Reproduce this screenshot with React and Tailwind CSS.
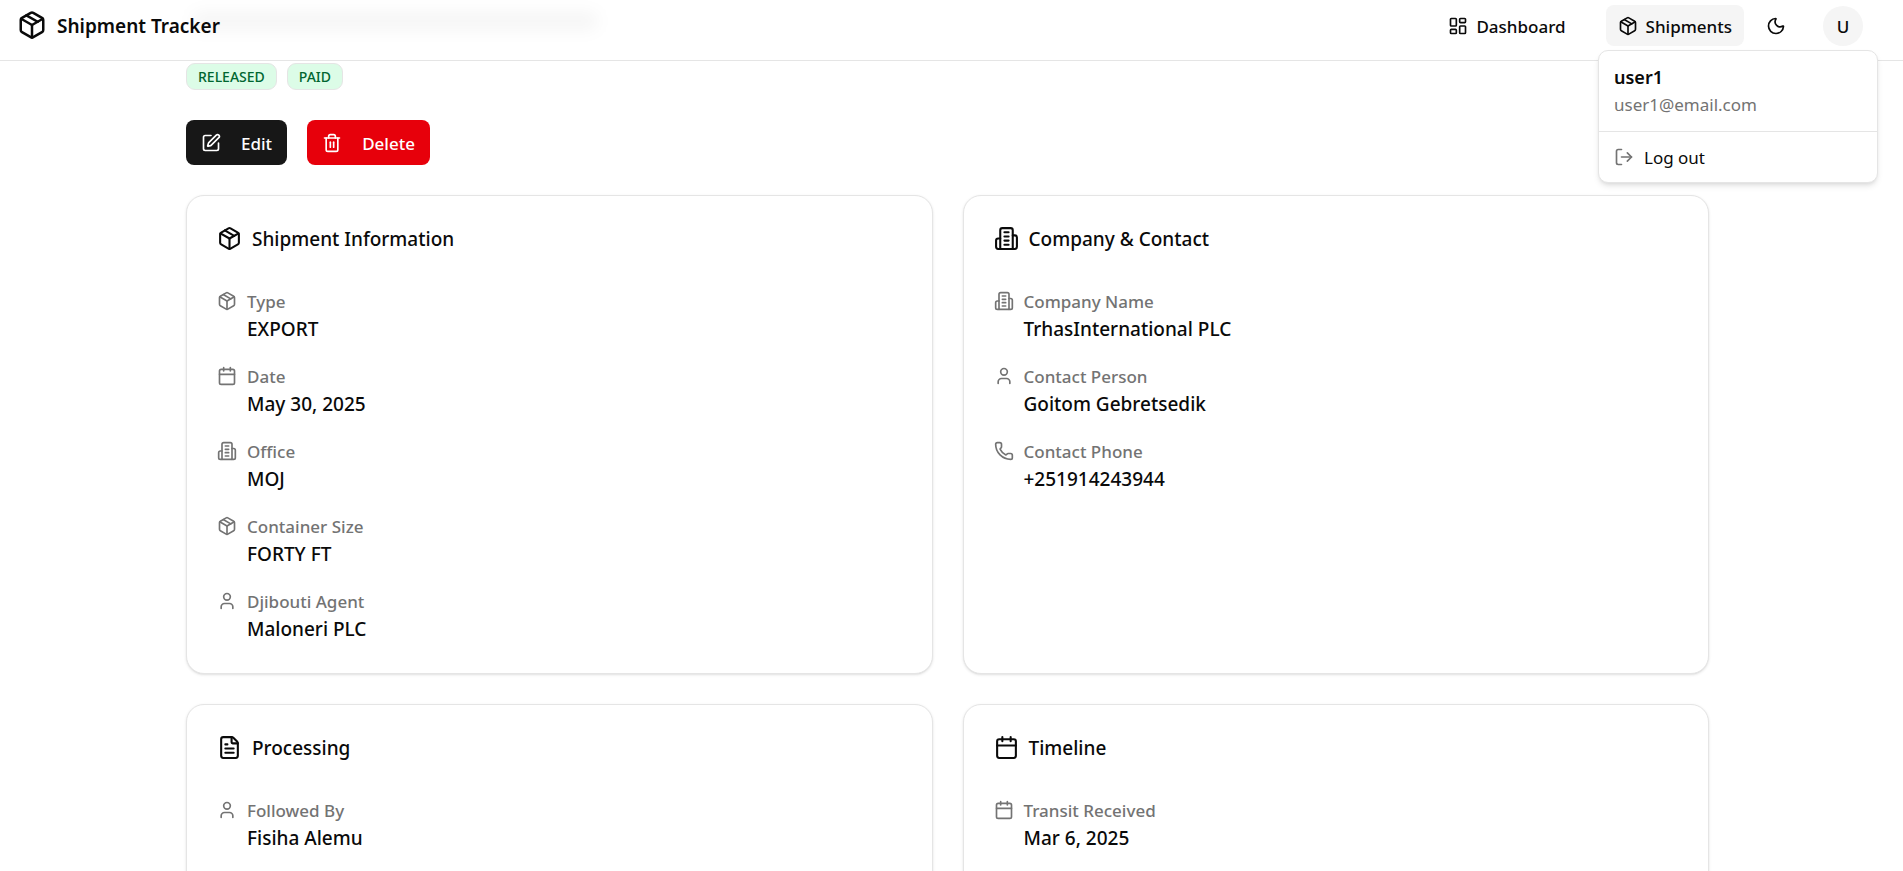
import React from "react";
import {
  Package,
  LayoutDashboard,
  Moon,
  LogOut,
  SquarePen,
  Trash2,
  Calendar,
  User,
  Phone,
  FileText,
} from "lucide-react";

function Building({ className }) {
  return (
    <svg
      className={className}
      viewBox="0 0 24 24"
      fill="none"
      stroke="currentColor"
      strokeWidth="2"
      strokeLinecap="round"
      strokeLinejoin="round"
      aria-hidden="true"
    >
      <path d="M6 22V4a2 2 0 0 1 2-2h8a2 2 0 0 1 2 2v18Z" />
      <path d="M6 12H4a2 2 0 0 0-2 2v6a2 2 0 0 0 2 2h2" />
      <path d="M18 9h2a2 2 0 0 1 2 2v9a2 2 0 0 1-2 2h-2" />
      <path d="M10 6h4" />
      <path d="M10 10h4" />
      <path d="M10 14h4" />
      <path d="M10 18h4" />
    </svg>
  );
}

const cards = [
  {
    title: "Shipment Information",
    icon: Package,
    rows: [
      { icon: Package, label: "Type", value: "EXPORT" },
      { icon: Calendar, label: "Date", value: "May 30, 2025" },
      { icon: Building, label: "Office", value: "MOJ" },
      { icon: Package, label: "Container Size", value: "FORTY FT" },
      { icon: User, label: "Djibouti Agent", value: "Maloneri PLC" },
    ],
  },
  {
    title: "Company & Contact",
    icon: Building,
    rows: [
      { icon: Building, label: "Company Name", value: "TrhasInternational PLC" },
      { icon: User, label: "Contact Person", value: "Goitom Gebretsedik" },
      { icon: Phone, label: "Contact Phone", value: "+251914243944" },
    ],
  },
  {
    title: "Processing",
    icon: FileText,
    rows: [{ icon: User, label: "Followed By", value: "Fisiha Alemu" }],
  },
  {
    title: "Timeline",
    icon: Calendar,
    rows: [{ icon: Calendar, label: "Transit Received", value: "Mar 6, 2025" }],
  },
];

function InfoRow({ icon: Icon, label, value }) {
  return (
    <div className="flex items-start gap-[10px]">
      <Icon className="mt-[3px] size-5 shrink-0 text-[#737373]" />
      <div>
        <dt className="pt-[2px] text-[17px] leading-6 font-medium text-[#737373]">{label}</dt>
        <dd className="pt-[2px] text-[19px] leading-[27px] font-medium">{value}</dd>
      </div>
    </div>
  );
}

function Card({ title, icon: Icon, rows }) {
  return (
    <section className="rounded-[18px] border border-[#e5e5e5] bg-white p-[30px] shadow-sm">
      <h2 className="flex items-center gap-[10px] text-[19px] leading-[23px] font-medium">
        <Icon className="size-[25px] shrink-0" />
        <span className="pt-[2px]">{title}</span>
      </h2>
      <dl className="mt-[37px] flex flex-col gap-5">
        {rows.map((row) => (
          <InfoRow key={row.label} {...row} />
        ))}
      </dl>
    </section>
  );
}

function UserMenu() {
  return (
    <div className="relative">
      <button
        type="button"
        aria-label="Account"
        className="flex size-10 items-center justify-center rounded-full bg-[#f5f5f5] pt-[2px] text-[17px] font-medium"
      >
        U
      </button>
      <div className="absolute top-11 -right-[15px] w-[280px] rounded-[10px] border border-[#e5e5e5] bg-white shadow-md">
        <div className="flex flex-col gap-1 border-b border-[#e5e5e5] px-[15px] py-[14px]">
          <p className="text-[18px] leading-6 font-semibold">user1</p>
          <p className="text-[17px] leading-6 text-[#737373]">user1@email.com</p>
        </div>
        <button type="button" className="flex h-[50px] w-full items-center gap-[10px] px-[15px] text-[17px]">
          <LogOut className="size-5 text-[#737373]" />
          <span className="pt-[3px]">Log out</span>
        </button>
      </div>
    </div>
  );
}

export default function App() {
  return (
    <div className="flex h-screen flex-col overflow-hidden bg-white font-['Noto_Sans','Open_Sans',sans-serif] text-[#0a0a0a]">
      <header className="relative z-10 flex h-[61px] shrink-0 items-start justify-between border-b border-[#e5e5e5] pt-[5px] pr-10 pl-[17px]">
        <div
          aria-hidden="true"
          className="absolute top-[12px] left-[192px] h-[18px] w-[406px] rounded-full bg-black/4 blur-[8px]"
        />
        <a href="#" className="relative flex h-10 items-center gap-[10px] text-[19px] font-semibold">
          <Package className="size-[30px]" />
          <span className="pt-[2px]">Shipment Tracker</span>
        </a>
        <nav className="flex items-center">
          <a
            href="#"
            className="mr-[28px] flex h-[41px] items-center gap-2 px-[12px] text-[17px] font-medium"
          >
            <LayoutDashboard className="size-5" />
            <span className="pt-[2px]">Dashboard</span>
          </a>
          <a
            href="#"
            className="flex h-[41px] items-center gap-2 rounded-[8px] bg-[#f5f5f5] px-[12px] text-[17px] font-medium"
          >
            <Package className="size-5" />
            <span className="pt-[2px]">Shipments</span>
          </a>
          <button type="button" aria-label="Toggle theme" className="mr-[27px] ml-[12px] flex size-10 items-center justify-center">
            <Moon className="size-5" />
          </button>
          <UserMenu />
        </nav>
      </header>

      <main className="pr-2">
        <div className="mx-auto w-full max-w-[1523px] pt-[2px]">
          <div className="flex gap-[10px]">
            <span className="rounded-[9px] border border-[#e5e5e5] bg-[#dcfce7] px-[11px] text-[14px] leading-[25px] font-medium text-[#016630]">
              RELEASED
            </span>
            <span className="rounded-[9px] border border-[#e5e5e5] bg-[#dcfce7] px-[11px] text-[14px] leading-[25px] font-medium text-[#016630]">
              PAID
            </span>
          </div>

          <div className="mt-[30px] flex gap-5">
            <button
              type="button"
              className="flex h-[45px] items-center gap-5 rounded-[8px] bg-[#171717] px-[15px] text-[17px] font-medium text-white"
            >
              <SquarePen className="size-5" />
              <span className="pt-[2px]">Edit</span>
            </button>
            <button
              type="button"
              className="flex h-[45px] items-center gap-5 rounded-[8px] bg-[#e7000b] px-[15px] text-[17px] font-medium text-white"
            >
              <Trash2 className="size-5" />
              <span className="pt-[2px]">Delete</span>
            </button>
          </div>

          <div className="mt-[30px] grid auto-rows-fr grid-cols-2 gap-[30px]">
            {cards.map((card) => (
              <Card key={card.title} {...card} />
            ))}
          </div>
        </div>
      </main>
    </div>
  );
}
